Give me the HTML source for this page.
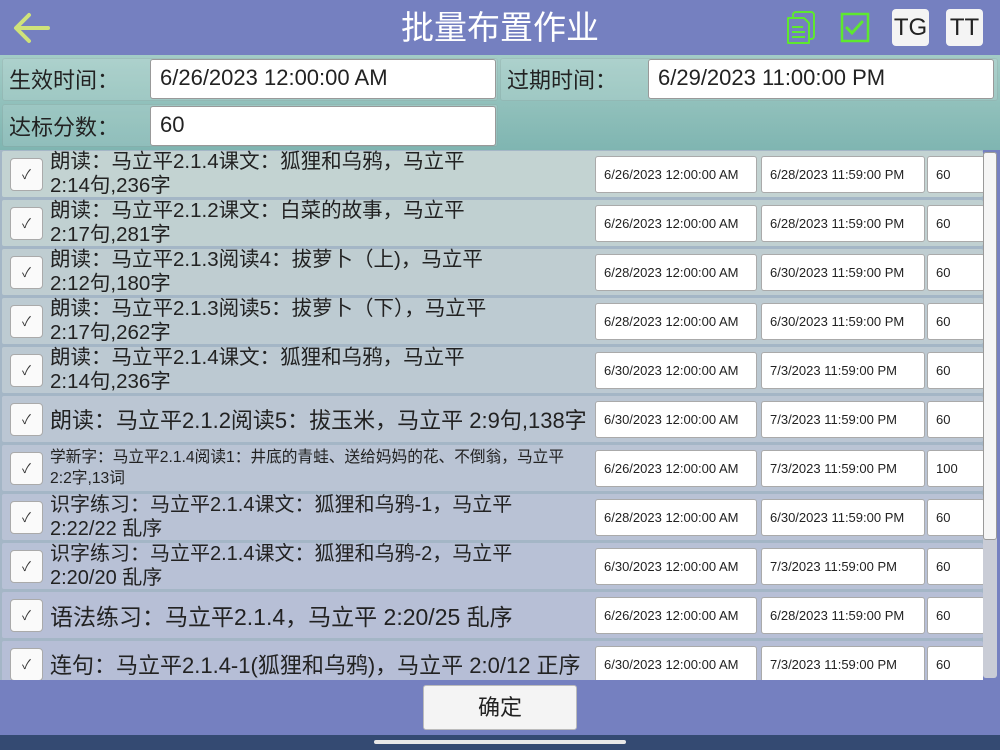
<!DOCTYPE html>
<html><head><meta charset="utf-8"><style>
*{margin:0;padding:0;box-sizing:border-box}
body{width:1000px;height:750px;overflow:hidden;background:#7580c0;font-family:"Liberation Sans","Noto Sans CJK SC",sans-serif;position:relative;color:#222}
.hdr{position:absolute;left:0;top:0;width:1000px;height:55px;background:#7580c0}
.title{position:absolute;left:0;width:1000px;top:8px;text-align:center;color:#fff;font-size:33px;line-height:40px}
.btn{position:absolute;top:9px;width:37px;height:37px;background:#f4f4f4;border-radius:4px;font-size:24px;text-align:center;line-height:37px;color:#222}
.top{position:absolute;left:0;top:55px;width:1000px;height:95px;background:linear-gradient(#a3ccc6,#7fb5b1)}
.cell{position:absolute;background:rgba(255,255,255,.12);border:1px solid rgba(0,0,0,.08);border-radius:3px}
.lbl{position:absolute;font-size:22px;color:#222}
.inp{position:absolute;background:#fff;border:1px solid #999;border-radius:3px;font-size:22px;padding-left:9px;line-height:36px}
.list{position:absolute;left:0;top:150px;width:983px;height:530px;overflow:hidden;background:#a4b6c6}
.row{position:absolute;left:2px;width:981px;height:46px;border-radius:2px}
.cb{position:absolute;left:8px;top:7px;width:33px;height:33px;background:#fafafa;border:1px solid #aaa;border-radius:4px;text-align:center;line-height:32px;font-size:13px;color:#333}
.txt{position:absolute;left:48px;top:0;width:545px;height:46px;display:flex;align-items:center;color:#222;white-space:nowrap}
.txt span{display:block;transform-origin:left center}
.f{position:absolute;top:5px;height:37px;background:#fff;border:1px solid #aaa;border-radius:3px;font-size:13px;line-height:35px;padding-left:8px;color:#222}
.sb{position:absolute;left:983px;top:152px;width:14px;height:526px;background:#c9ccd6;border-radius:3px}
.th{position:absolute;left:983px;top:152px;width:14px;height:388px;background:#f5f5f5;border:1px solid #999;border-radius:3px}
.ok{position:absolute;left:423px;top:685px;width:154px;height:45px;background:#f4f4f4;border:1px solid #bbb;border-radius:3px;text-align:center;line-height:44px;font-size:22px}
.bot{position:absolute;left:0;top:735px;width:1000px;height:15px;background:#344a72}
.bar{position:absolute;left:374px;top:740px;width:252px;height:4px;background:#e8e8e8;border-radius:2px}
.t2{font-size:20.5px;line-height:24px}
</style></head><body>
<div class="hdr">
<svg style="position:absolute;left:12px;top:12px" width="38" height="32" viewBox="0 0 38 32"><path d="M36 16H5M17 3L4 16l13 13" fill="none" stroke="#cfe27a" stroke-width="4" stroke-linecap="round" stroke-linejoin="round"/></svg>
<div class="title">批量布置作业</div>
<svg style="position:absolute;left:785px;top:10px" width="32" height="36" viewBox="0 0 32 36"><rect x="8" y="2" width="21" height="27" rx="3" fill="none" stroke="#5ee82f" stroke-width="2"/><path d="M3 9v24h21V13l-5-5H3z" fill="#7580c0" stroke="#5ee82f" stroke-width="2" stroke-linejoin="round"/><path d="M7 17h11M7 22h13M7 27h13" stroke="#5ee82f" stroke-width="2"/></svg>
<svg style="position:absolute;left:840px;top:12px" width="30" height="31" viewBox="0 0 30 31"><rect x="2" y="2" width="26" height="27" fill="none" stroke="#5ee82f" stroke-width="2.5"/><path d="M7 16l5 5 10-11" fill="none" stroke="#5ee82f" stroke-width="3" stroke-linecap="round"/></svg>
<div class="btn" style="left:892px">TG</div>
<div class="btn" style="left:946px">TT</div>
</div>
<div class="top">
<div class="cell" style="left:2px;top:3px;width:496px;height:43px"></div>
<div class="cell" style="left:500px;top:3px;width:498px;height:43px"></div>
<div class="cell" style="left:2px;top:49px;width:496px;height:43px"></div>
<div class="lbl" style="left:9px;top:8px">生效时间：</div>
<div class="inp" style="left:150px;top:4px;width:346px;height:40px">6/26/2023 12:00:00 AM</div>
<div class="lbl" style="left:507px;top:8px">过期时间：</div>
<div class="inp" style="left:648px;top:4px;width:346px;height:40px">6/29/2023 11:00:00 PM</div>
<div class="lbl" style="left:9px;top:55px">达标分数：</div>
<div class="inp" style="left:150px;top:51px;width:346px;height:40px">60</div>
</div>
<div class="list">
<div class="row" style="top:1px;background:#c3d3d2"><div class="cb">✓</div><div class="txt"><span class="t2">朗读：马立平2.1.4课文：狐狸和乌鸦，马立平<br>2:14句,236字</span></div><div class="f" style="left:593px;width:162px">6/26/2023 12:00:00 AM</div><div class="f" style="left:759px;width:164px">6/28/2023 11:59:00 PM</div><div class="f" style="left:925px;width:58px">60</div></div>
<div class="row" style="top:50px;background:#c0d0d1"><div class="cb">✓</div><div class="txt"><span class="t2">朗读：马立平2.1.2课文：白菜的故事，马立平<br>2:17句,281字</span></div><div class="f" style="left:593px;width:162px">6/26/2023 12:00:00 AM</div><div class="f" style="left:759px;width:164px">6/28/2023 11:59:00 PM</div><div class="f" style="left:925px;width:58px">60</div></div>
<div class="row" style="top:99px;background:#bfcdd1"><div class="cb">✓</div><div class="txt"><span class="t2">朗读：马立平2.1.3阅读4：拔萝卜（上)，马立平<br>2:12句,180字</span></div><div class="f" style="left:593px;width:162px">6/28/2023 12:00:00 AM</div><div class="f" style="left:759px;width:164px">6/30/2023 11:59:00 PM</div><div class="f" style="left:925px;width:58px">60</div></div>
<div class="row" style="top:148px;background:#bdcbd2"><div class="cb">✓</div><div class="txt"><span class="t2">朗读：马立平2.1.3阅读5：拔萝卜（下），马立平<br>2:17句,262字</span></div><div class="f" style="left:593px;width:162px">6/28/2023 12:00:00 AM</div><div class="f" style="left:759px;width:164px">6/30/2023 11:59:00 PM</div><div class="f" style="left:925px;width:58px">60</div></div>
<div class="row" style="top:197px;background:#bcc9d2"><div class="cb">✓</div><div class="txt"><span class="t2">朗读：马立平2.1.4课文：狐狸和乌鸦，马立平<br>2:14句,236字</span></div><div class="f" style="left:593px;width:162px">6/30/2023 12:00:00 AM</div><div class="f" style="left:759px;width:164px">7/3/2023 11:59:00 PM</div><div class="f" style="left:925px;width:58px">60</div></div>
<div class="row" style="top:246px;background:#bbc6d3"><div class="cb">✓</div><div class="txt"><span style="font-size:22px">朗读：马立平2.1.2阅读5：拔玉米，马立平 2:9句,138字</span></div><div class="f" style="left:593px;width:162px">6/30/2023 12:00:00 AM</div><div class="f" style="left:759px;width:164px">7/3/2023 11:59:00 PM</div><div class="f" style="left:925px;width:58px">60</div></div>
<div class="row" style="top:295px;background:#bac4d4"><div class="cb">✓</div><div class="txt"><span style="font-size:16px;line-height:21px;transform:scaleX(.98)">学新字：马立平2.1.4阅读1：井底的青蛙、送给妈妈的花、不倒翁，马立平<br>2:2字,13词</span></div><div class="f" style="left:593px;width:162px">6/26/2023 12:00:00 AM</div><div class="f" style="left:759px;width:164px">7/3/2023 11:59:00 PM</div><div class="f" style="left:925px;width:58px">100</div></div>
<div class="row" style="top:344px;background:#b9c2d5"><div class="cb">✓</div><div class="txt"><span style="font-size:20px;line-height:24px">识字练习：马立平2.1.4课文：狐狸和乌鸦-1，马立平<br>2:22/22 乱序</span></div><div class="f" style="left:593px;width:162px">6/28/2023 12:00:00 AM</div><div class="f" style="left:759px;width:164px">6/30/2023 11:59:00 PM</div><div class="f" style="left:925px;width:58px">60</div></div>
<div class="row" style="top:393px;background:#b8c1d6"><div class="cb">✓</div><div class="txt"><span style="font-size:20px;line-height:24px">识字练习：马立平2.1.4课文：狐狸和乌鸦-2，马立平<br>2:20/20 乱序</span></div><div class="f" style="left:593px;width:162px">6/30/2023 12:00:00 AM</div><div class="f" style="left:759px;width:164px">7/3/2023 11:59:00 PM</div><div class="f" style="left:925px;width:58px">60</div></div>
<div class="row" style="top:442px;background:#b7bfd6"><div class="cb">✓</div><div class="txt"><span style="font-size:23px">语法练习：马立平2.1.4，马立平 2:20/25 乱序</span></div><div class="f" style="left:593px;width:162px">6/26/2023 12:00:00 AM</div><div class="f" style="left:759px;width:164px">6/28/2023 11:59:00 PM</div><div class="f" style="left:925px;width:58px">60</div></div>
<div class="row" style="top:491px;background:#b6bed6"><div class="cb">✓</div><div class="txt"><span style="font-size:22px">连句：马立平2.1.4-1(狐狸和乌鸦)，马立平 2:0/12 正序</span></div><div class="f" style="left:593px;width:162px">6/30/2023 12:00:00 AM</div><div class="f" style="left:759px;width:164px">7/3/2023 11:59:00 PM</div><div class="f" style="left:925px;width:58px">60</div></div>
</div>
<div class="sb"></div><div class="th"></div>
<div class="ok">确定</div>
<div class="bot"></div><div class="bar"></div>
</body></html>
